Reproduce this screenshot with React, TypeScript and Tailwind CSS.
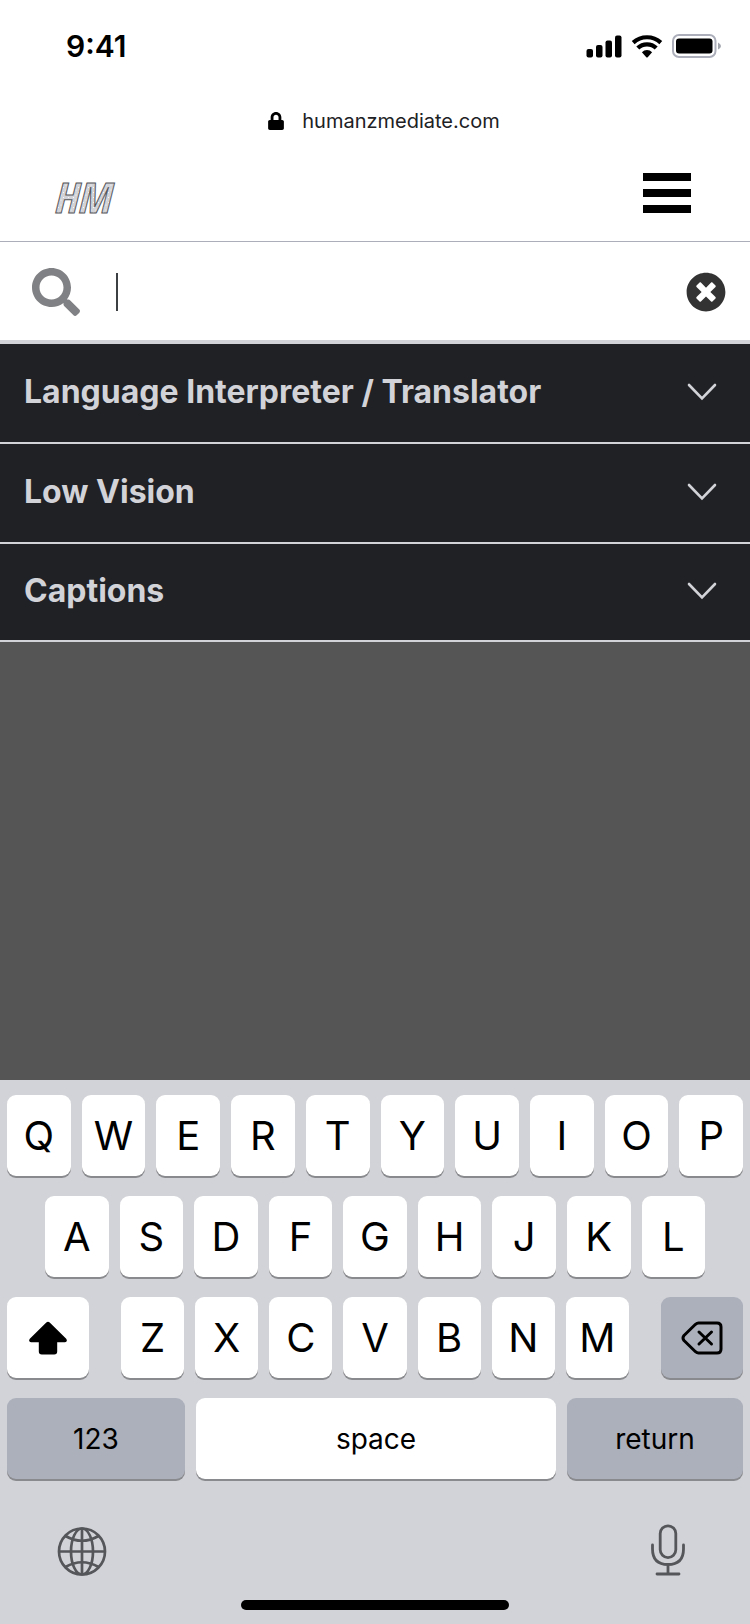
import { useState } from "react";
import { FaLock, FaSearch, FaTimesCircle } from "react-icons/fa";

const topics = ["Language Interpreter / Translator", "Low Vision", "Captions"];

const firstRow = ["Q", "W", "E", "R", "T", "Y", "U", "I", "O", "P"];
const secondRow = ["A", "S", "D", "F", "G", "H", "J", "K", "L"];
const thirdRow = ["Z", "X", "C", "V", "B", "N", "M"];

const keyBase =
  "flex h-[81px] items-center justify-center rounded-[9px] text-black shadow-[0_2px_0_#898a8d]";

const StatusBar = () => {
  return (
    <div className="flex h-[92px] items-center justify-between pl-[66px] pr-7">
      <span className="text-[30px] font-semibold leading-none">9:41</span>
      <div className="flex items-center gap-[9px]">
        {/* signal */}
        <svg width="36" height="24" viewBox="0 0 36 24" aria-hidden="true">
          <rect x="0.5" y="15" width="6.5" height="8.5" rx="2" />
          <rect x="10" y="11" width="6.5" height="12.5" rx="2" />
          <rect x="19.5" y="6.5" width="6.5" height="17" rx="2" />
          <rect x="29" y="1.5" width="6.5" height="22" rx="2" />
        </svg>
        {/* wifi */}
        <svg width="32" height="24" viewBox="0 0 32 24" aria-hidden="true">
          <g fill="none" stroke="#000" strokeWidth="4.2">
            <path d="M2.2 8.6A20.5 20.5 0 0 1 29.8 8.6" />
            <path d="M6.8 14.1A13 13 0 0 1 25.2 14.1" />
          </g>
          <path d="M10.9 18.2A7.2 7.2 0 0 1 21.1 18.2L16.7 23.2Q16 23.8 15.3 23.2Z" />
        </svg>
        {/* battery */}
        <svg width="50" height="24" viewBox="0 0 50 24" aria-hidden="true">
          <rect x="1" y="1" width="42.5" height="22" rx="6" fill="none" stroke="#acafba" strokeWidth="2" />
          <rect x="4" y="4.5" width="36.5" height="15" rx="3" />
          <path d="M46 8.5Q49 10 49 12T46 15.5Z" fill="#a3a5ad" />
        </svg>
      </div>
    </div>
  );
};

const Header = () => {
  return (
    <header className="bg-white text-black">
      <StatusBar />
      <div className="flex h-[58px] items-center justify-center gap-[18px] pl-[18px]">
        <FaLock className="h-[18px] w-4" />
        <span className="text-xl text-[#202124]">humanzmediate.com</span>
      </div>
      <nav className="flex h-[92px] items-center justify-between border-b border-[#acafb9] pb-[6px] pl-[52px] pr-[59px]">
        <a href="#home" aria-label="HM home">
          <svg width="80" height="64" viewBox="0 0 80 64">
            <defs>
              <pattern id="dots" width="5" height="5" patternUnits="userSpaceOnUse">
                <rect width="5" height="5" fill="#d2d3d8" />
                <circle cx="1.5" cy="1.5" r="0.6" fill="#fff" />
                <circle cx="4" cy="4" r="0.6" fill="#fff" />
              </pattern>
            </defs>
            <text
              x="1"
              y="52"
              fill="url(#dots)"
              stroke="#55565a"
              className="font-['Noto_Sans_ExtraCondensed','Open_Sans_Condensed','Roboto_Condensed','Liberation_Sans_Narrow',sans-serif] text-[42px] font-bold italic"
            >
              HM
            </text>
          </svg>
        </a>
        <button type="button" aria-label="Menu" className="flex w-12 flex-col gap-2">
          <span className="h-2 w-full bg-black" />
          <span className="h-2 w-full bg-black" />
          <span className="h-2 w-full bg-black" />
        </button>
      </nav>
    </header>
  );
};

const SearchBar = () => {
  const [query, setQuery] = useState("");

  return (
    <form className="flex h-[102px] items-center border-b-4 border-[#d2d3d8] bg-white pl-8 pr-6 pt-[2px]">
      <label htmlFor="search" aria-label="Search">
        <FaSearch className="size-12 text-[#808184]" />
      </label>
      <span className="ml-9 h-[38px] w-[2px] bg-[#3c4043]" />
      <input
        id="search"
        type="text"
        value={query}
        onChange={(e) => setQuery(e.target.value)}
        className="h-12 min-w-0 flex-1 px-2 text-[32px] caret-transparent outline-none"
      />
      <button type="button" aria-label="Clear" onClick={() => setQuery("")}>
        <FaTimesCircle className="size-10 text-[#333333]" />
      </button>
    </form>
  );
};

const TopicList = () => {
  return (
    <ul className="bg-[#202125] text-[#d2d3d8]">
      {topics.map((topic) => (
        <li key={topic} className="h-[100px] border-b-2 border-[#d2d3d8] last:h-[98px]">
          <button
            type="button"
            aria-expanded="false"
            className="flex size-full items-center justify-between pb-[2px] pl-6 pr-[33px] text-left text-[32px] font-bold"
          >
            {topic}
            <svg width="30" height="18" viewBox="0 0 30 18" fill="none" aria-hidden="true">
              <path d="M2 2L15 15.5L28 2" stroke="currentColor" strokeWidth="2.6" strokeLinecap="round" />
            </svg>
          </button>
        </li>
      ))}
    </ul>
  );
};

const LetterKey = ({ letter }: { letter: string }) => {
  return (
    <button type="button" className={`${keyBase} min-w-0 flex-1 bg-white text-[40px]`}>
      {letter}
    </button>
  );
};

const Keyboard = () => {
  return (
    <div className="bg-[#d2d3d8] pb-[14px] pt-[15px]">
      <div className="flex flex-col gap-5 px-[7px]">
        <div className="flex gap-[11px]">
          {firstRow.map((letter) => (
            <LetterKey key={letter} letter={letter} />
          ))}
        </div>
        <div className="flex gap-[11px] px-[38px]">
          {secondRow.map((letter) => (
            <LetterKey key={letter} letter={letter} />
          ))}
        </div>
        <div className="flex gap-8">
          <button type="button" aria-label="Shift" className={`${keyBase} w-[82px] bg-white`}>
            <svg width="40" height="36" viewBox="0 0 40 36" aria-hidden="true">
              <path d="M18.3 2.6Q20 1 21.7 2.6L38.2 18.8Q40 21.8 37 22.2H29.2V31.5Q29.2 34.5 26.2 34.5H13.8Q10.8 34.5 10.8 31.5V22.2H3Q0 21.8 1.8 18.8Z" />
            </svg>
          </button>
          <div className="flex flex-1 gap-[11px]">
            {thirdRow.map((letter) => (
              <LetterKey key={letter} letter={letter} />
            ))}
          </div>
          <button type="button" aria-label="Delete" className={`${keyBase} w-[82px] bg-[#acb0bb]`}>
            <svg width="42" height="34" viewBox="0 0 42 34" fill="none" stroke="#000" strokeWidth="3" strokeLinecap="round" strokeLinejoin="round" aria-hidden="true">
              <path d="M17.5 2H36Q40 2 40 6V28Q40 32 36 32H17.5Q16 32 14.5 30.7L3 19.5Q1 17 3 14.5L14.5 3.3Q16 2 17.5 2Z" />
              <path d="M18 11L30.5 23M30.5 11L18 23" />
            </svg>
          </button>
        </div>
        <div className="flex gap-[11px] text-[28px]">
          <button type="button" className={`${keyBase} w-[178px] bg-[#acb0bb]`}>
            123
          </button>
          <button type="button" className={`${keyBase} flex-1 bg-white`}>
            space
          </button>
          <button type="button" className={`${keyBase} w-[176px] bg-[#acb0bb]`}>
            return
          </button>
        </div>
      </div>
      <div className="flex items-center justify-between pb-6 pl-[57px] pr-16 pt-[45px] text-[#54565a]">
        <button type="button" aria-label="Next keyboard">
          <svg width="50" height="52" viewBox="0 0 50 52" fill="none" stroke="currentColor" strokeWidth="2.7" aria-hidden="true">
            <circle cx="25" cy="27.5" r="23" />
            <ellipse cx="25" cy="27.5" rx="11" ry="23" />
            <path d="M25 4.5V50.5M2 27.5H48" />
            <path d="M8.5 12Q25 21.5 41.5 12M8.5 43Q25 33.5 41.5 43" />
          </svg>
        </button>
        <button type="button" aria-label="Dictate">
          <svg width="36" height="52" viewBox="0 0 36 52" fill="none" stroke="currentColor" strokeWidth="2.8" strokeLinecap="round" aria-hidden="true">
            <rect x="10.2" y="1.8" width="15.6" height="31.8" rx="7.8" />
            <path d="M2.5 21V25Q2.5 40.5 18 40.5T33.5 25V21M18 40.5V50M7 50H29" />
          </svg>
        </button>
      </div>
      <div className="mx-auto h-[10px] w-[268px] rounded-full bg-black" />
    </div>
  );
};

const App = () => {
  return (
    <div className="flex min-h-screen flex-col bg-[#555555] font-[Inter,'Liberation_Sans',sans-serif]">
      <Header />
      <main className="flex-1">
        <SearchBar />
        <TopicList />
      </main>
      <Keyboard />
    </div>
  );
};

export default App;
